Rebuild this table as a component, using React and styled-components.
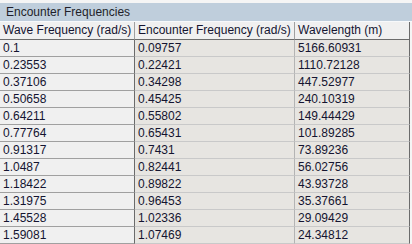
import React from "react";
import styled, { createGlobalStyle } from "styled-components";

const Global = createGlobalStyle`
  html, body { margin: 0; padding: 0; background: #f5f5f5; }
  body { font-family: "Liberation Sans", Arial, sans-serif; font-size: 12px; color: #141430; }
`;

const Panel = styled.div`
  width: 412px;
  height: 244px;
  overflow: hidden;
  padding-top: 3px;
  box-sizing: border-box;
  background: #f5f5f5;
`;

const Title = styled.div`
  height: 18px;
  line-height: 18px;
  padding-left: 6px;
  background: #bfcedc;
  color: #1e1e2a;
  border-bottom: 1px solid #f7f9fb;
`;

const Grid = styled.div`
  display: grid;
  grid-template-columns: 135px 160px 115px;
  width: 410px;
`;

const Head = styled.div`
  height: 17px;
  line-height: 17px;
  padding-left: 3px;
  background: #f0f0f0;
  border-right: 1px solid ${(p) => (p.$last ? "#6b6b6b" : "#a0a0a0")};
  border-bottom: 1px solid #6b6b6b;
  white-space: nowrap;
  overflow: hidden;
`;

const Cell = styled.div`
  height: 16px;
  line-height: 16px;
  padding-left: 3px;
  white-space: nowrap;
  background: ${(p) => (p.$first ? "#f0f0f0" : "#e7e5e1")};
  border-bottom: 1px solid ${(p) => (p.$first ? "#a0a0a0" : "#c9c9c9")};
  border-right: 1px solid ${(p) => (p.$first || p.$last ? "#6b6b6b" : "#b4b4b4")};
`;

const rows = [
  ["0.1", "0.09757", "5166.60931"],
  ["0.23553", "0.22421", "1110.72128"],
  ["0.37106", "0.34298", "447.52977"],
  ["0.50658", "0.45425", "240.10319"],
  ["0.64211", "0.55802", "149.44429"],
  ["0.77764", "0.65431", "101.89285"],
  ["0.91317", "0.7431", "73.89236"],
  ["1.0487", "0.82441", "56.02756"],
  ["1.18422", "0.89822", "43.93728"],
  ["1.31975", "0.96453", "35.37661"],
  ["1.45528", "1.02336", "29.09429"],
  ["1.59081", "1.07469", "24.34812"],
];

export default function App() {
  return (
    <>
      <Global />
      <Panel>
        <Title>Encounter Frequencies</Title>
        <Grid>
          <Head>Wave Frequency (rad/s)</Head>
          <Head>Encounter Frequency (rad/s)</Head>
          <Head $last>Wavelength (m)</Head>
          {rows.map((r, i) => (
            <React.Fragment key={i}>
              <Cell $first>{r[0]}</Cell>
              <Cell>{r[1]}</Cell>
              <Cell $last>{r[2]}</Cell>
            </React.Fragment>
          ))}
        </Grid>
      </Panel>
    </>
  );
}
